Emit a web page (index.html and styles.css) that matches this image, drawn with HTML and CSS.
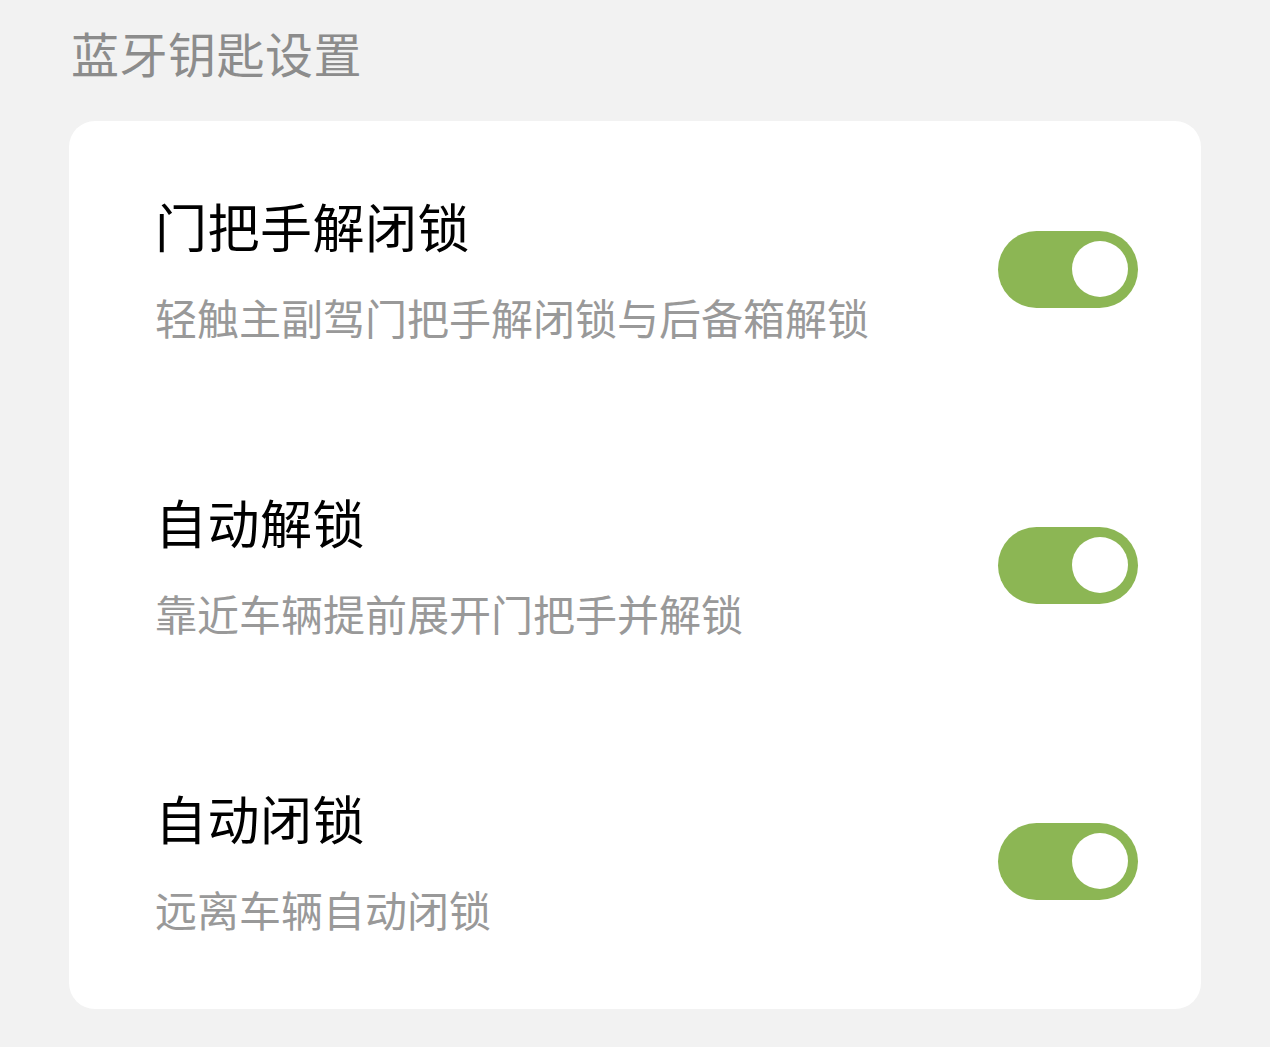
FILE: index.html
```html
<!DOCTYPE html>
<html lang="zh-CN">
<head>
<meta charset="utf-8">
<link rel="stylesheet" href="styles.css">
</head>
<body>
<div class="page">
  <h1 class="section-title">蓝牙钥匙设置</h1>
  <div class="card">
    <div class="row">
      <div class="texts">
        <div class="title">门把手解闭锁</div>
        <div class="desc">轻触主副驾门把手解闭锁与后备箱解锁</div>
      </div>
      <div class="switch"><span class="knob"></span></div>
    </div>
    <div class="row">
      <div class="texts">
        <div class="title">自动解锁</div>
        <div class="desc">靠近车辆提前展开门把手并解锁</div>
      </div>
      <div class="switch"><span class="knob"></span></div>
    </div>
    <div class="row">
      <div class="texts">
        <div class="title">自动闭锁</div>
        <div class="desc">远离车辆自动闭锁</div>
      </div>
      <div class="switch"><span class="knob"></span></div>
    </div>
  </div>
</div>
</body>
</html>
```
FILE: styles.css
```css
html, body {
  margin: 0;
  padding: 0;
  background: #f2f2f2;
}
body {
  font-family: "Noto Sans CJK SC", "Noto Sans", sans-serif;
}
.page {
  padding: 24px 69px 0 69px;
}
.section-title {
  margin: 0 0 41px 2px;
  font-size: 48px;
  line-height: 56px;
  font-weight: normal;
  color: #8c8c8c;
  letter-spacing: 0.5px;
}
.card {
  background: #ffffff;
  border-radius: 26px;
  width: 1132px;
  box-sizing: border-box;
  padding: 0 63px 0 86px;
}
.row {
  display: flex;
  align-items: center;
  justify-content: space-between;
  padding: 75px 0 75px 0;
}
.texts {
  display: flex;
  flex-direction: column;
}
.title {
  font-size: 52px;
  line-height: 60px;
  color: #000;
  letter-spacing: 0.5px;
}
.desc {
  margin-top: 36px;
  font-size: 42px;
  line-height: 50px;
  color: #999999;
}
.switch {
  width: 140px;
  height: 77px;
  border-radius: 39px;
  background: #8cb654;
  display: flex;
  align-items: center;
  justify-content: flex-end;
  padding-right: 10px;
  box-sizing: border-box;
}
.knob {
  width: 56px;
  height: 56px;
  border-radius: 50%;
  background: #fff;
}
```
